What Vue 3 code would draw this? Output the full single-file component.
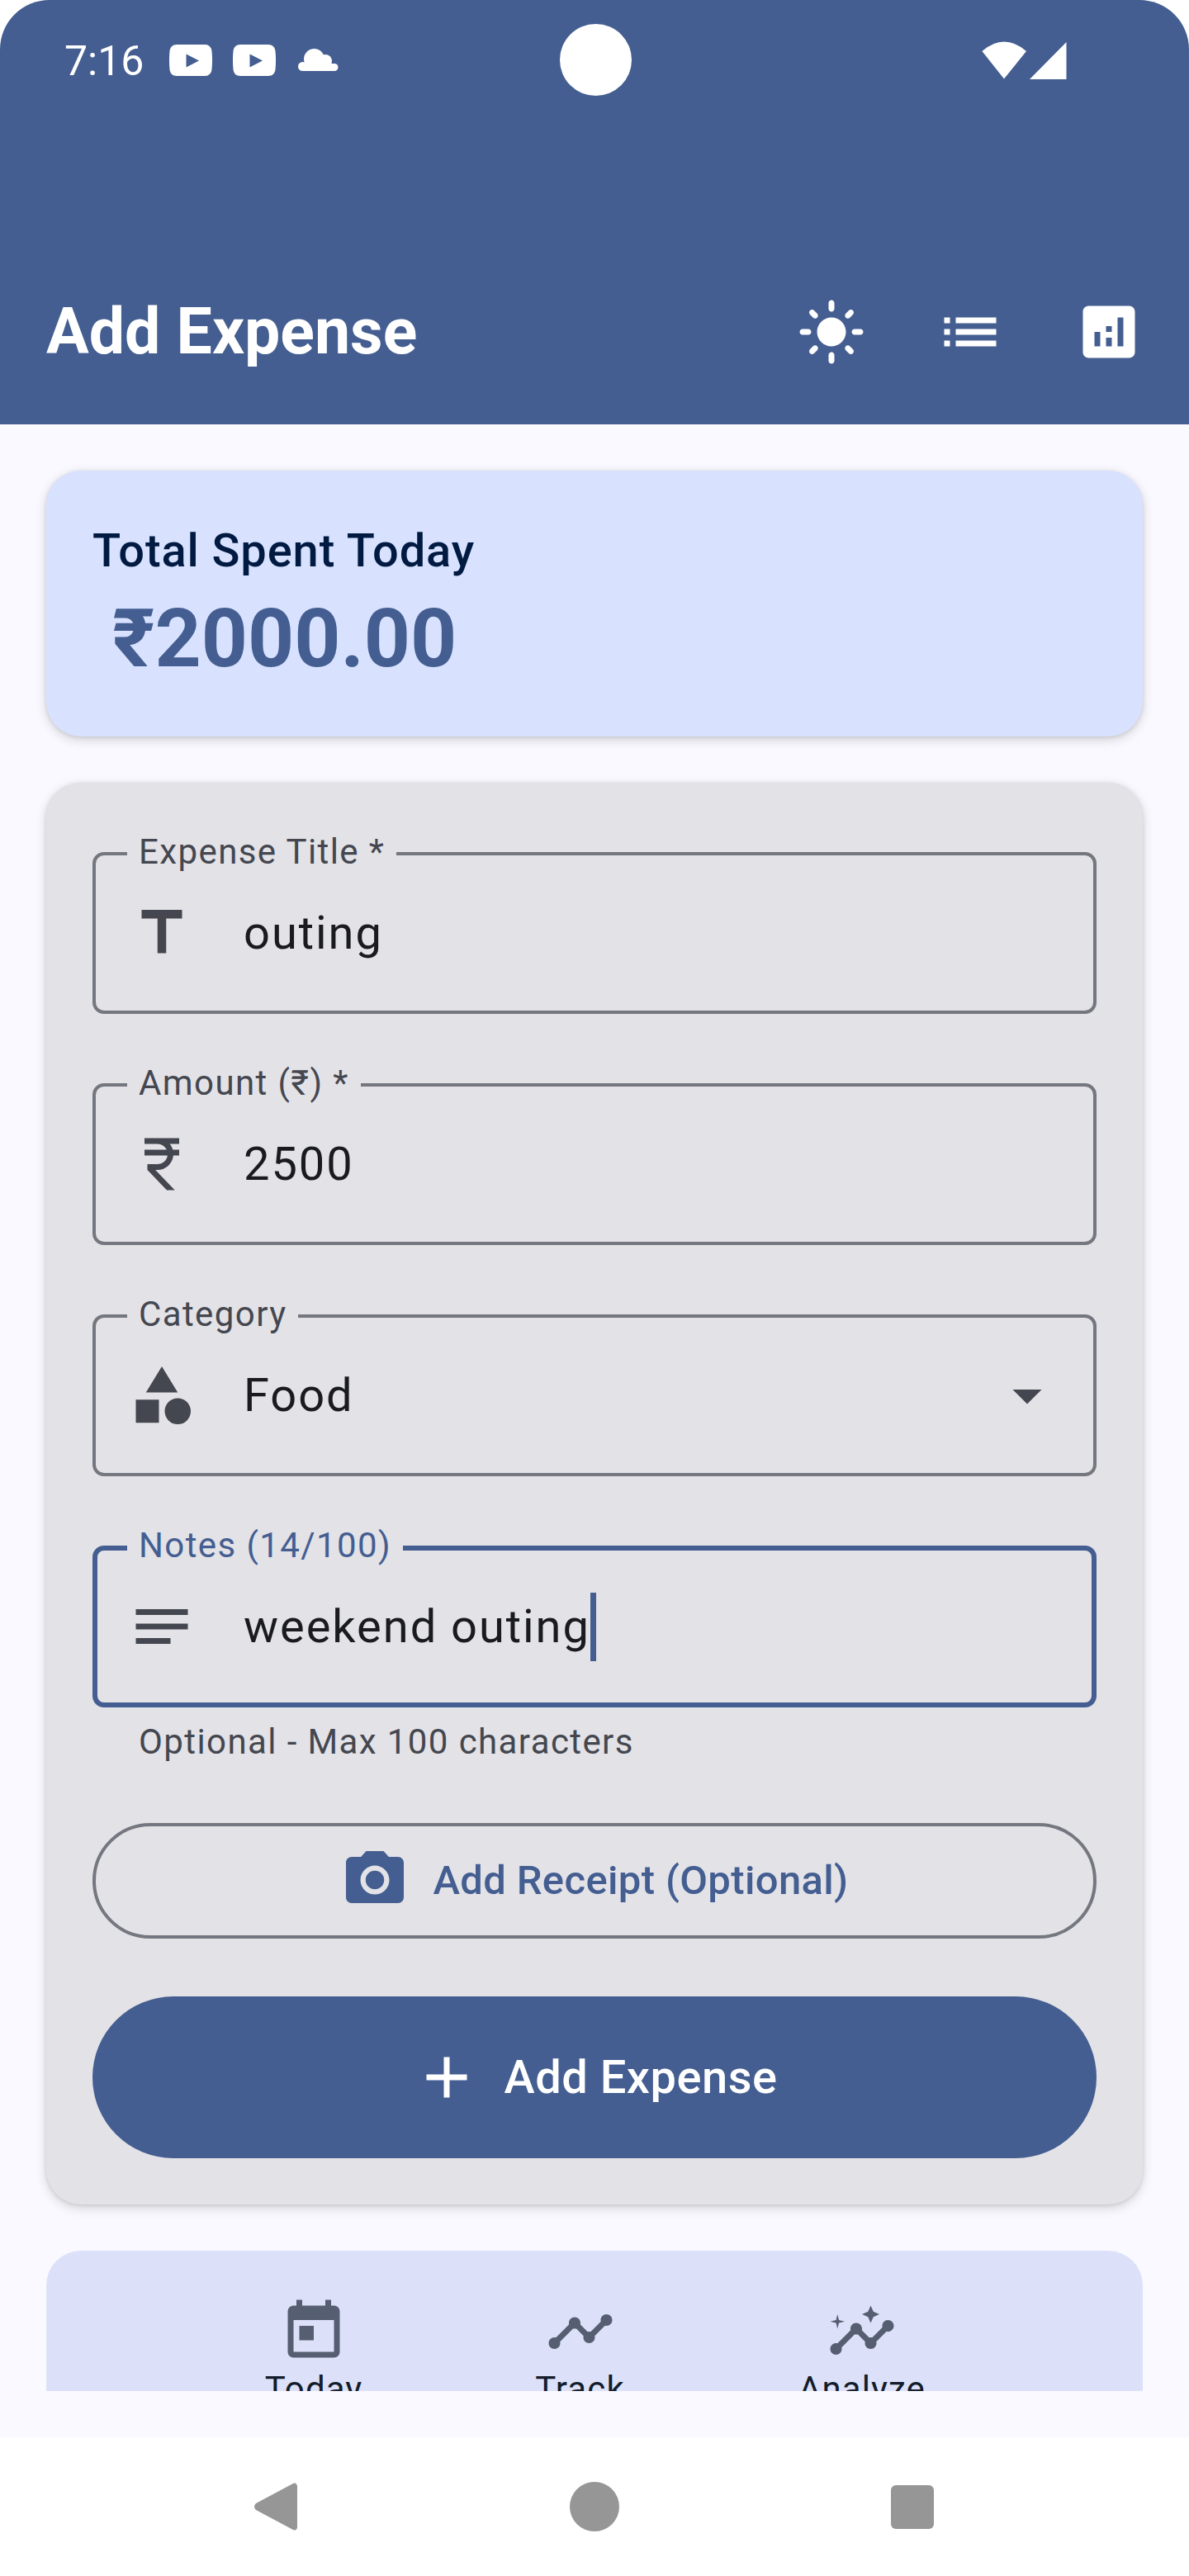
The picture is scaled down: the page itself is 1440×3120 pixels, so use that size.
<template>
	<div class="screen">
		<header class="header">
			<div class="status">
				<span class="time">7:16</span>
				<svg class="yt" viewBox="0 0 52 38"><path fill-rule="evenodd" d="M9 0h34c5 0 8 3 8.500 8 .7 7 .7 15 0 22-.5 5-3.500 8-8.500 8H9c-5 0-8-3-8.500-8-.7-7-.7-15 0-22C1 3 4 0 9 0zm11.500 11.500v16L36 19.500z" /></svg>
				<svg class="yt second" viewBox="0 0 52 38"><path fill-rule="evenodd" d="M9 0h34c5 0 8 3 8.500 8 .7 7 .7 15 0 22-.5 5-3.500 8-8.500 8H9c-5 0-8-3-8.500-8-.7-7-.7-15 0-22C1 3 4 0 9 0zm11.500 11.500v16L36 19.500z" /></svg>
				<svg class="cloud" viewBox="0 0 49 27"><circle cx="5.500" cy="21.500" r="5.500" /><circle cx="19.500" cy="12.500" r="12.500" /><circle cx="33" cy="15" r="8" /><circle cx="44" cy="22.500" r="4.500" /><rect x="5" y="18" width="39" height="9" /></svg>
				<span class="status-fill"></span>
				<svg class="wifi" viewBox="0 0 54 46"><path d="M0.400 12Q27-10.800 54 12L27 45.500z" /></svg>
				<svg class="signal" viewBox="0 0 45 45"><path d="M0 45L44.500 0V45z" /></svg>
			</div>
			<div class="camera"></div>
			<div class="appbar">
				<h1>Add Expense</h1>
				<button v-for="b in barIcons" :key="b" class="bar-btn">
					<svg viewBox="0 0 24 24"><path :d="b" /></svg>
				</button>
			</div>
		</header>

		<main class="content">
			<section class="card total">
				<p class="total-label">Total Spent Today</p>
				<p class="total-value">₹2000.00</p>
			</section>

			<section class="card form">
				<div v-for="f in fields" :key="f.label" class="field" :class="{ focused: f.focused }">
					<span class="field-label">{{ f.label }}</span>
					<svg class="lead" viewBox="0 0 24 24">
						<path :d="f.icon" />
						<circle v-if="f.circle" cx="17.500" cy="17.500" r="4.500" />
					</svg>
					<span class="value">{{ f.value }}</span>
					<span v-if="f.focused" class="cursor"></span>
					<svg v-if="f.dropdown" class="arrow" viewBox="0 0 24 24"><path d="M7 10l5 5 5-5z" /></svg>
				</div>
				<p class="helper">Optional - Max 100 characters</p>

				<button class="receipt">
					<svg viewBox="0 0 24 24">
						<circle cx="12" cy="12" r="3.200" />
						<path d="M9 2L7.170 4H4c-1.100 0-2 .9-2 2v12c0 1.100.9 2 2 2h16c1.100 0 2-.9 2-2V6c0-1.100-.9-2-2-2h-3.170L15 2H9zm3 15c-2.760 0-5-2.240-5-5s2.240-5 5-5 5 2.240 5 5-2.240 5-5 5z" />
					</svg>
					<span>Add Receipt (Optional)</span>
				</button>

				<button class="submit">
					<svg viewBox="0 0 24 24"><path d="M19 13h-6v6h-2v-6H5v-2h6V5h2v6h6v2z" /></svg>
					<span>Add Expense</span>
				</button>
			</section>

			<nav class="tabs">
				<div v-for="t in tabs" :key="t.label" class="tab">
					<svg viewBox="0 0 24 24"><path v-for="d in t.paths" :key="d" :d="d" /></svg>
					<span>{{ t.label }}</span>
				</div>
			</nav>
		</main>

		<footer class="sysnav">
			<svg class="back" viewBox="0 0 52 58"><path d="M46 1.500c3-2.500 6-.5 6 3v49c0 3.500-3 5.500-6 3L2 33c-2.600-2.300-2.600-5.700 0-8z" /></svg>
			<span class="home"></span>
			<span class="recent"></span>
		</footer>
	</div>
</template>
<script setup>
const barIcons = [
	'M12 7c-2.760 0-5 2.240-5 5s2.240 5 5 5 5-2.240 5-5-2.240-5-5-5zM2 13h2c.55 0 1-.45 1-1s-.45-1-1-1H2c-.55 0-1 .45-1 1s.45 1 1 1zm18 0h2c.55 0 1-.45 1-1s-.45-1-1-1h-2c-.55 0-1 .45-1 1s.45 1 1 1zM11 2v2c0 .55.45 1 1 1s1-.45 1-1V2c0-.55-.45-1-1-1s-1 .45-1 1zm0 18v2c0 .55.45 1 1 1s1-.45 1-1v-2c0-.55-.45-1-1-1s-1 .45-1 1zM5.990 4.580c-.39-.39-1.030-.39-1.410 0-.39.39-.39 1.030 0 1.410l1.060 1.060c.39.39 1.030.39 1.410 0s.39-1.030 0-1.410L5.990 4.580zm12.370 12.370c-.39-.39-1.030-.39-1.410 0-.39.39-.39 1.030 0 1.410l1.060 1.060c.39.39 1.030.39 1.410 0 .39-.39.39-1.030 0-1.410l-1.060-1.060zm1.060-10.960c.39-.39.39-1.030 0-1.410-.39-.39-1.030-.39-1.410 0l-1.060 1.060c-.39.39-.39 1.030 0 1.410s1.030.39 1.410 0l1.060-1.060zM7.050 18.360c.39-.39.39-1.030 0-1.410-.39-.39-1.030-.39-1.410 0l-1.060 1.060c-.39.39-.39 1.030 0 1.410s1.030.39 1.410 0l1.060-1.060z',
	'M3 13h2v-2H3v2zm0 4h2v-2H3v2zm0-8h2V7H3v2zm4 4h14v-2H7v2zm0 4h14v-2H7v2zM7 7v2h14V7H7z',
	'M19 3H5c-1.100 0-2 .9-2 2v14c0 1.100.9 2 2 2h14c1.100 0 2-.9 2-2V5c0-1.100-.9-2-2-2zM9 17H7v-5h2v5zm4 0h-2v-3h2v3zm0-5h-2v-2h2v2zm4 5h-2V7h2v10z'
];

const fields = [
	{ label: 'Expense Title *', value: 'outing', icon: 'M5 4v3h5.500v12h3V7H19V4z' },
	{ label: 'Amount (₹) *', value: '2500', icon: 'M13.660 7C13.100 5.820 11.900 5 10.500 5H6V3h12v2h-3.260c.48.58.84 1.260 1.050 2H18v2h-2.020c-.25 2.800-2.610 5-5.480 5h-.73l6.730 7h-2.770L7 14v-2h3.500c1.760 0 3.220-1.300 3.460-3H6V7h7.660z' },
	{ label: 'Category', value: 'Food', icon: 'M12 2l-5.500 9h11zM3 13.500h8v8H3z', circle: true, dropdown: true },
	{ label: 'Notes (14/100)', value: 'weekend outing', icon: 'M3 18h12v-2H3v2zM3 6v2h18V6H3zm0 7h18v-2H3v2z', focused: true }
];

const tabs = [
	{ label: 'Today', paths: ['M19 3h-1V1h-2v2H8V1H6v2H5c-1.110 0-1.990.9-1.990 2L3 19c0 1.100.89 2 2 2h14c1.100 0 2-.9 2-2V5c0-1.100-.9-2-2-2zm0 16H5V8h14v11zM7 10h5v5H7z'] },
	{ label: 'Track', paths: ['M23 8c0 1.100-.9 2-2 2-.18 0-.35-.02-.51-.07l-3.560 3.550c.05.16.07.34.07.52 0 1.100-.9 2-2 2s-2-.9-2-2c0-.18.02-.36.07-.52l-2.550-2.550c-.16.05-.34.07-.52.07s-.36-.02-.52-.07l-4.550 4.560c.05.16.07.33.07.51 0 1.100-.9 2-2 2s-2-.9-2-2 .9-2 2-2c.18 0 .35.02.51.07l4.560-4.550C8.020 9.360 8 9.180 8 9c0-1.100.9-2 2-2s2 .9 2 2c0 .18-.02.36-.07.52l2.550 2.550c.16-.05.34-.07.52-.07s.36.02.52.07l3.550-3.560C19.020 8.350 19 8.180 19 8c0-1.100.9-2 2-2s2 .9 2 2z'] },
	{ label: 'Analyze', paths: ['M21 8c-1.450 0-2.260 1.440-1.930 2.510l-3.550 3.560c-.3-.09-.74-.09-1.040 0l-2.550-2.550C12.270 10.450 11.460 9 10 9c-1.450 0-2.270 1.440-1.930 2.520l-4.560 4.550C2.440 15.740 1 16.550 1 18c0 1.100.9 2 2 2 1.450 0 2.260-1.440 1.930-2.510l4.550-4.560c.3.09.74.09 1.040 0l2.550 2.550C12.730 16.550 13.540 18 15 18c1.450 0 2.270-1.440 1.930-2.520l3.560-3.550c1.070.33 2.510-.48 2.510-1.930 0-1.100-.9-2-2-2z', 'M15 9l.94-2.070L18 6l-2.060-.93L15 3l-.92 2.070L12 6l2.080.93z', 'M3.500 11L4 9l2-.5L4 8l-.5-2L3 8l-2 .5L3 9z'] }
];
</script>
<style scoped>
.screen {
	width: 1440px;
	height: 3120px;
	overflow: hidden;
	display: flex;
	flex-direction: column;
	background: #fff;
	font-family: Roboto, "Noto Sans", sans-serif;
}

p, h1 {
	margin: 0;
}

button {
	border: none;
	padding: 0;
	background: none;
	font-family: inherit;
	display: flex;
	align-items: center;
	justify-content: center;
}

svg {
	display: block;
	flex: none;
}

.header {
	position: relative;
	height: 514px;
	flex: none;
	display: flex;
	flex-direction: column;
	justify-content: space-between;
	background: #445e91;
	border-radius: 60px 60px 0 0;
}

.status {
	height: 148px;
	display: flex;
	align-items: center;
	padding: 0 148px 0 78px;
	color: #fff;
	fill: #fff;
}

.time {
	font-size: 50px;
	width: 127px;
}

.yt {
	width: 52px;
	height: 38px;
	margin-top: -2px;
}

.yt.second {
	margin-left: 25px;
}

.cloud {
	width: 49px;
	height: 27px;
	margin: -4px 0 0 27px;
}

.status-fill {
	flex: 1;
}

.wifi {
	width: 54px;
	height: 46px;
	margin-top: -2px;
}

.signal {
	width: 45px;
	height: 45px;
	margin: -2px 0 0 4px;
}

.camera {
	position: absolute;
	left: 678px;
	top: 29px;
	width: 87px;
	height: 87px;
	border-radius: 50%;
	background: #fff;
}

.appbar {
	height: 224px;
	display: flex;
	align-items: center;
	padding: 0 13px 0 56px;
}

.appbar h1 {
	flex: 1;
	font-size: 77px;
	font-weight: 700;
	color: #fff;
}

.bar-btn {
	width: 168px;
	height: 168px;
}

.bar-btn svg {
	width: 84px;
	height: 84px;
	fill: #fff;
}

.content {
	flex: 1;
	display: flex;
	flex-direction: column;
	gap: 56px;
	padding: 56px 56px 0;
	background: #faf9ff;
}

.card {
	border-radius: 42px;
	box-shadow: 0 4px 14px rgba(0, 0, 0, 0.16), 0 1px 5px rgba(0, 0, 0, 0.1);
}

.total {
	height: 322px;
	flex: none;
	box-sizing: border-box;
	padding: 60px 56px 0;
	background: #d8e2ff;
}

.total-label {
	font-size: 56px;
	font-weight: 500;
	letter-spacing: 0.9px;
	line-height: 74px;
	color: #001a41;
}

.total-value {
	font-size: 98px;
	font-weight: 700;
	line-height: 126px;
	margin: 7px 0 0 24px;
	color: #445e91;
}

.form {
	padding: 84px 56px 56px;
	display: flex;
	flex-direction: column;
	background: #e3e2e7;
}

.field {
	position: relative;
	height: 196px;
	flex: none;
	display: flex;
	align-items: center;
	margin-bottom: 84px;
	padding-left: 179px;
	box-sizing: border-box;
	border: 4px solid #74777f;
	border-radius: 14px;
}

.field.focused {
	border: 6px solid #445e91;
	margin-bottom: 0;
	padding-left: 177px;
}

.field-label {
	position: absolute;
	left: 38px;
	top: -29px;
	padding: 0 14px;
	font-size: 42px;
	line-height: 50px;
	letter-spacing: 1.4px;
	color: #44474f;
	background: #e3e2e7;
}

.focused .field-label {
	left: 36px;
	top: -31px;
	color: #445e91;
}

.lead {
	position: absolute;
	left: 38px;
	top: 52px;
	width: 84px;
	height: 84px;
	fill: #44474f;
}

.focused .lead {
	left: 36px;
	top: 50px;
}

.value {
	font-size: 56px;
	letter-spacing: 1.95px;
	color: #1a1b20;
}

.cursor {
	width: 7px;
	height: 83px;
	background: #445e91;
}

.arrow {
	position: absolute;
	right: 38px;
	top: 52px;
	width: 84px;
	height: 84px;
	fill: #44474f;
}

.helper {
	height: 82px;
	padding-left: 56px;
	font-size: 42px;
	line-height: 84px;
	letter-spacing: 1.4px;
	color: #44474f;
}

.receipt {
	height: 140px;
	margin-top: 58px;
	gap: 28px;
	box-sizing: border-box;
	border: 4px solid #74777f;
	padding-bottom: 2px;
	border-radius: 70px;
	font-size: 49px;
	font-weight: 500;
	letter-spacing: 0.35px;
	color: #445e91;
}

.receipt svg {
	width: 84px;
	height: 84px;
	fill: #445e91;
}

.submit {
	height: 196px;
	margin-top: 70px;
	gap: 28px;
	border-radius: 98px;
	background: #445e91;
	font-size: 56px;
	font-weight: 500;
	letter-spacing: 0.5px;
	color: #fff;
}

.submit svg {
	width: 84px;
	height: 84px;
	fill: #fff;
}

.tabs {
	height: 170px;
	overflow: hidden;
	flex: none;
	display: grid;
	grid-template-columns: 322px 323px 360px;
	padding-left: 163px;
	border-radius: 42px 42px 0 0;
	background: #dce1f9;
}

.tab {
	display: flex;
	flex-direction: column;
	align-items: center;
	padding-top: 56px;
	font-size: 42px;
	line-height: 50px;
	letter-spacing: 1.1px;
	color: #131c2b;
}

.tab svg {
	width: 84px;
	height: 84px;
	margin-bottom: 3px;
	fill: #565e71;
}

.sysnav {
	height: 168px;
	flex: none;
	display: flex;
	align-items: center;
	padding: 0 0 0 308px;
	background: #fff;
}

.back {
	width: 52px;
	height: 58px;
	fill: #969696;
}

.home {
	width: 60px;
	height: 60px;
	margin-left: 330px;
	border-radius: 50%;
	background: #969696;
}

.recent {
	width: 52px;
	height: 53px;
	margin-left: 329px;
	border-radius: 6px;
	background: #969696;
}
</style>
